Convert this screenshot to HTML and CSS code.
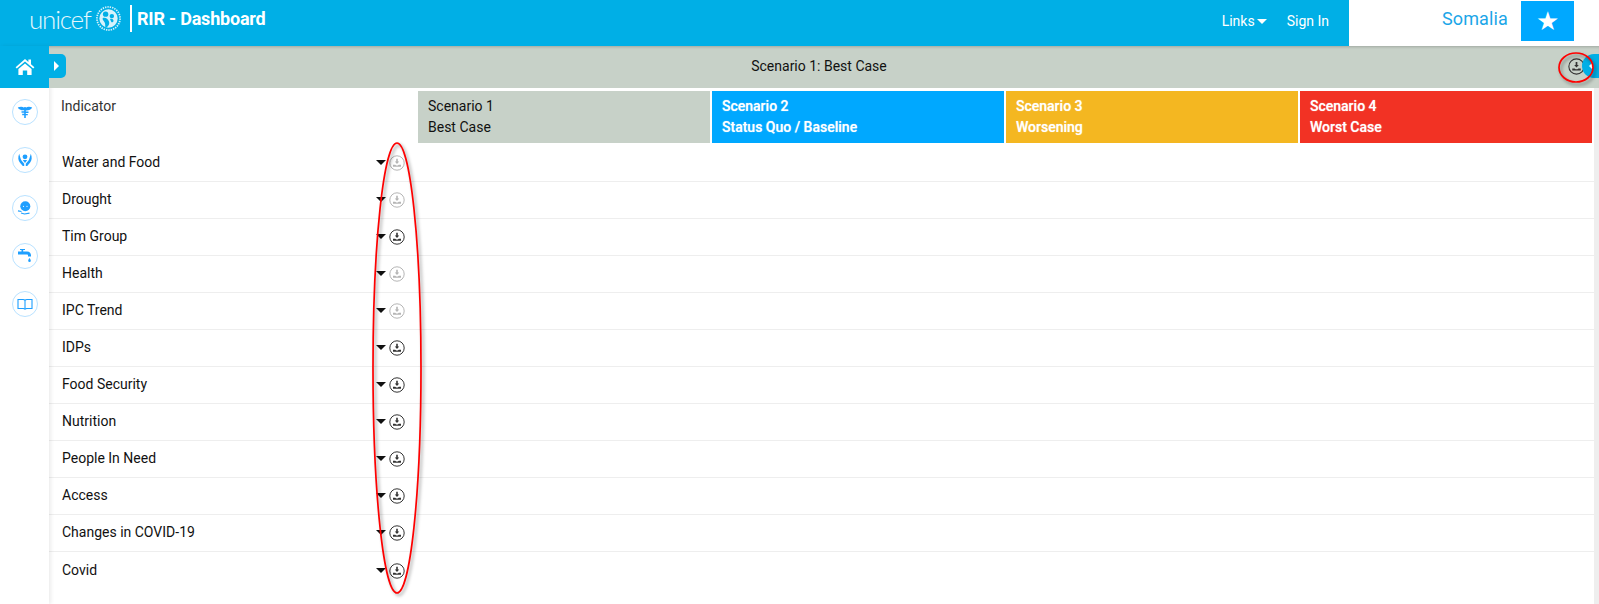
FILE: index.html
```html
<!DOCTYPE html>
<html lang="en">
<head>
  <meta charset="UTF-8">
  <meta name="viewport" content="width=device-width, initial-scale=1.0">
  <title>RIR - Dashboard</title>
  <link rel="stylesheet" href="styles.css">
</head>
<body>
  <svg class="defs" width="0" height="0">
    <symbol id="dl" viewBox="0 0 16 16">
      <circle cx="8" cy="8" r="7.2" fill="none" stroke="currentColor" stroke-width="1"/>
      <path d="M7.2 3.800h1.600v2.800h1.400L8 9 5.800 6.600h1.400z" fill="currentColor"/>
      <path d="M4 9.800h2.200l1 .8h1.600l1-.8H12v2H4z" fill="currentColor"/>
    </symbol>
  </svg>

  <header class="topbar">
    <div class="brand">
      <span class="logo-text">unicef</span>
      <svg class="emblem" viewBox="0 0 26 26">
        <circle cx="13" cy="13" r="12" fill="none" stroke="#d6f2fb" stroke-width="1.800" stroke-dasharray="1.400 1.100"/>
        <circle cx="13" cy="13" r="9.500" fill="#d6f2fb"/>
        <circle cx="10" cy="8.500" r="2.800" fill="#00afe6"/>
        <circle cx="16.500" cy="10.500" r="2.300" fill="#00afe6"/>
        <path d="M7 12.500c3-.8 5.500 1 6.500 3.500s-1 6-3.200 6.200c-1.300-.2-.2-3-1.300-5-.9-1.700-2.600-3-2-4.700z" fill="#00afe6"/>
        <path d="M14.500 13.500c1.500-.4 3 0 3.600 1.200.5 1.200-.6 2.300-2 2.200z" fill="#00afe6"/>
      </svg>
      <span class="brand-line"></span>
      <span class="brand-title">RIR - Dashboard</span>
    </div>
    <nav class="topnav">
      <a class="topnav-link">Links<span class="caret"></span></a>
      <a class="topnav-link">Sign In</a>
    </nav>
    <div class="country">
      <span class="country-name">Somalia</span>
      <button class="star-btn">★</button>
    </div>
  </header>

  <div class="page">
    <aside class="sidebar">
      <div class="home">
        <svg width="20" height="18" viewBox="0 0 20 18"><path d="M10 1 .6 9.200l1.200 1.300L10 3.400l8.200 7.100 1.200-1.300L16 6.200V1.600h-2.600v2.400zM3.400 11 10 5.400l6.600 5.600V17h-4.400v-4.600H7.800V17H3.400z" fill="#fff"/></svg>
      </div>
      <div class="side-icons">
        <div class="side-icon">
          <svg viewBox="0 0 16 16"><path d="M.8 3.500c2.400-1 4.800-1 6.400.3V3h1.600v.8c1.600-1.300 4-1.300 6.400-.3-.8 1.900-3.400 3-6.400 2.900v1h2.700v1.500H8.800v1h2v1.400h-2V14H7.200v-2.800h-2V9.800h2v-1H4.500V7.300h2.700v-1C4.200 6.500 1.600 5.400.8 3.500z" fill="#1e9fff"/></svg>
        </div>
        <div class="side-icon">
          <svg viewBox="0 0 16 16"><circle cx="8" cy="4.800" r="2.400" fill="#1e9fff"/><path d="M5.800 8h4.400L8 11z" fill="#1e9fff"/><path d="M2.200 1.800c-1.400 3.400-1.200 6.600.8 9l2.800 3.200h1.400v-2.300L4.500 8.500C3.500 7 3 4.500 2.200 1.800zM13.800 1.800c1.400 3.400 1.200 6.600-.8 9l-2.800 3.200H8.800v-2.300l2.700-3.200c1-1.500 1.500-4 2.300-6.700z" fill="#1e9fff"/></svg>
        </div>
        <div class="side-icon">
          <svg viewBox="0 0 16 16"><circle cx="8.300" cy="6.300" r="5" fill="#1e9fff"/><circle cx="6.500" cy="6.300" r=".6" fill="#fff"/><circle cx="10" cy="6.300" r=".6" fill="#fff"/><path d="M1 10.800l3.500.7M4 13l3.500 1 5-.8" stroke="#1e9fff" stroke-width="1.200" fill="none"/></svg>
        </div>
        <div class="side-icon">
          <svg viewBox="0 0 16 16"><path d="M1 3.500h3.500V2H3V1h5v1H6.200v1.500H10c2.800 0 4 1.700 4 4v1h-3V7.200c0-.5-.3-.7-.8-.7H1z" fill="#1e9fff"/><path d="M12.500 10c.8 1.200 1.300 2 1.300 2.800a1.300 1.300 0 0 1-2.600 0c0-.8.500-1.600 1.300-2.800z" fill="#1e9fff"/></svg>
        </div>
        <div class="side-icon">
          <svg viewBox="0 0 16 16"><path d="M1 3.500h5c1 0 1.700.4 2 1 .3-.6 1-1 2-1h5v9H9.500l-1.500.7-1.500-.7H1zM8 4.500v8" fill="none" stroke="#1e9fff" stroke-width="1.100"/></svg>
        </div>
      </div>
    </aside>

    <main class="content">
      <div class="titlebar">
        <span>Scenario 1: Best Case</span>
        <svg class="title-dl"><use href="#dl"/></svg>
      </div>

      <div class="board">
        <div class="head-row">
          <div class="head-label">Indicator</div>
          <div class="scenario s1">Scenario 1<br>Best Case</div>
          <div class="scenario s2">Scenario 2<br>Status Quo / Baseline</div>
          <div class="scenario s3">Scenario 3<br>Worsening</div>
          <div class="scenario s4">Scenario 4<br>Worst Case</div>
        </div>
        <div class="rows">
          <div class="row"><span class="row-name">Water and Food</span><span class="arrow"></span><svg class="dl off"><use href="#dl"/></svg></div>
          <div class="row"><span class="row-name">Drought</span><span class="arrow"></span><svg class="dl off"><use href="#dl"/></svg></div>
          <div class="row"><span class="row-name">Tim Group</span><span class="arrow"></span><svg class="dl"><use href="#dl"/></svg></div>
          <div class="row"><span class="row-name">Health</span><span class="arrow"></span><svg class="dl off"><use href="#dl"/></svg></div>
          <div class="row"><span class="row-name">IPC Trend</span><span class="arrow"></span><svg class="dl off"><use href="#dl"/></svg></div>
          <div class="row"><span class="row-name">IDPs</span><span class="arrow"></span><svg class="dl"><use href="#dl"/></svg></div>
          <div class="row"><span class="row-name">Food Security</span><span class="arrow"></span><svg class="dl"><use href="#dl"/></svg></div>
          <div class="row"><span class="row-name">Nutrition</span><span class="arrow"></span><svg class="dl"><use href="#dl"/></svg></div>
          <div class="row"><span class="row-name">People In Need</span><span class="arrow"></span><svg class="dl"><use href="#dl"/></svg></div>
          <div class="row"><span class="row-name">Access</span><span class="arrow"></span><svg class="dl"><use href="#dl"/></svg></div>
          <div class="row"><span class="row-name">Changes in COVID-19</span><span class="arrow"></span><svg class="dl"><use href="#dl"/></svg></div>
          <div class="row"><span class="row-name">Covid</span><span class="arrow"></span><svg class="dl"><use href="#dl"/></svg></div>
        </div>
      </div>
    </main>
  </div>

  <div class="tab tab-left"><span class="tab-arrow-right"></span></div>
  <div class="tab tab-right"><span class="tab-arrow-left"></span></div>

  <svg class="mark mark-rows" viewBox="0 0 54 460"><ellipse cx="26" cy="227" rx="24" ry="225" class="mark-shadow"/><ellipse cx="24" cy="225" rx="24" ry="225" class="mark-line"/></svg>
  <svg class="mark mark-top" viewBox="0 0 40 36"><ellipse cx="19" cy="17" rx="17" ry="14.500" class="mark-shadow"/><ellipse cx="17" cy="14.500" rx="17" ry="14.500" class="mark-line"/></svg>
</body>
</html>
```

FILE: styles.css
```css
* {
  box-sizing: border-box;
}
html, body {
  height: 100%;
}
body {
  margin: 0;
  font-family: Roboto, Arial, sans-serif;
  font-size: 14px;
  color: #212529;
  background-color: #fff;
  overflow: hidden;
}
.defs {
  position: absolute;
}

/* top bar */
.topbar {
  display: flex;
  height: 46px;
  background-color: #00afe6;
  color: #fff;
}
.brand {
  display: flex;
  align-items: center;
  padding: 0 0 9px 29px;
  flex: 1;
}
.logo-text {
  width: 63px;
  font-family: Lato, Roboto, sans-serif;
  font-weight: 300;
  font-size: 26px;
  letter-spacing: -1.200px;
  line-height: 30px;
  color: #e4f7fc;
}
.emblem {
  width: 25px;
  height: 25px;
  margin-left: 4px;
}
.brand-line {
  width: 2px;
  height: 27px;
  margin-left: 9px;
  background-color: #fff;
}
.brand-title {
  margin-left: 5px;
  font-size: 18px;
  font-weight: 700;
  letter-spacing: -0.2px;
}
.topnav {
  display: flex;
  align-items: center;
  gap: 20px;
  padding: 0 20px 4px 0;
}
.topnav-link {
  display: flex;
  align-items: center;
  font-size: 14px;
}
.caret {
  width: 0;
  height: 0;
  margin-left: 2px;
  border-top: 5px solid #fff;
  border-left: 5px solid transparent;
  border-right: 5px solid transparent;
}
.country {
  display: flex;
  align-items: flex-start;
  width: 250px;
  height: 46px;
  padding: 1px 25px 0 93px;
  background-color: #fff;
}
.country-name {
  flex: 1;
  margin-top: 7px;
  font-size: 18px;
  line-height: 22px;
  letter-spacing: 0.1px;
  color: #1ba6e8;
}
.star-btn {
  width: 53px;
  height: 40px;
  padding: 0;
  border: none;
  background-color: #00a8ff;
  color: #fff;
  font-size: 26px;
  line-height: 40px;
}

/* layout */
.page {
  display: flex;
  height: 558px;
}
.sidebar {
  width: 49px;
  flex-shrink: 0;
  box-shadow: 2px 0 4px rgba(0, 0, 0, 0.08);
  position: relative;
}
.home {
  display: flex;
  align-items: center;
  justify-content: center;
  height: 42px;
  background-color: #00afe6;
}
.side-icons {
  display: flex;
  flex-direction: column;
  align-items: center;
  gap: 22px;
  padding-top: 11px;
}
.side-icon {
  display: flex;
  align-items: center;
  justify-content: center;
  width: 26px;
  height: 26px;
  border: 1px solid #b9e2ff;
  border-radius: 50%;
}
.side-icon svg {
  width: 16px;
  height: 16px;
}
.content {
  flex: 1;
}
.titlebar {
  display: flex;
  align-items: center;
  justify-content: center;
  position: relative;
  height: 42px;
  padding: 0 10px 2px 0;
  background-color: #c7d1c8;
  box-shadow: inset 0 3px 3px -2px rgba(0, 0, 0, 0.2);
  color: #111;
}
.title-dl {
  position: absolute;
  right: 14px;
  top: 12px;
  width: 17px;
  height: 17px;
  color: #333;
}

/* board */
.board {
  padding-top: 3px;
  border-right: 5px solid #eee;
  height: 516px;
}
.head-row {
  display: flex;
  height: 52px;
  gap: 2px;
}
.head-label {
  width: 369px;
  padding: 5px 12px;
  line-height: 20px;
  margin-right: -2px;
  color: #333;
}
.scenario {
  width: 292px;
  padding: 5px 10px;
  line-height: 21px;
  font-weight: 500;
  color: #fff;
  text-shadow: 0 0 1px rgba(255, 255, 255, 0.7);
}
.scenario.s1 {
  background-color: #c7d1c8;
  color: #111;
  font-weight: 400;
  text-shadow: none;
}
.scenario.s2 {
  background-color: #00a8ff;
}
.scenario.s3 {
  background-color: #f4b721;
}
.scenario.s4 {
  background-color: #f23224;
}
.rows {
  padding-top: 2px;
}
.row {
  display: flex;
  align-items: center;
  height: 37px;
  padding-left: 13px;
  border-bottom: 1px solid #eee;
  color: #111;
}
.row:last-child {
  border-bottom: none;
}
.row-name {
  width: 314px;
  margin-top: -2px;
}
.arrow {
  width: 0;
  height: 0;
  margin-top: -1px;
  border-top: 5px solid #111;
  border-left: 5px solid transparent;
  border-right: 5px solid transparent;
}
.dl {
  width: 16px;
  height: 16px;
  margin-left: 3px;
  color: #333;
}
.dl.off {
  color: #b5b5b5;
}

/* collapse tabs */
.tab {
  position: absolute;
  top: 54px;
  width: 17px;
  height: 24px;
  background-color: #00afe6;
  display: flex;
  align-items: center;
  justify-content: center;
}
.tab-left {
  left: 49px;
  border-radius: 0 5px 5px 0;
}
.tab-right {
  right: 0;
  border-radius: 12px 0 0 12px;
  justify-content: flex-end;
  padding-right: 6px;
}
.tab-arrow-right {
  border-left: 5px solid #fff;
  border-top: 5px solid transparent;
  border-bottom: 5px solid transparent;
  margin-right: 3px;
}
.tab-arrow-left {
  border-right: 4px solid #fff;
  border-top: 4px solid transparent;
  border-bottom: 4px solid transparent;
}

/* red annotations */
.mark {
  position: absolute;
  overflow: visible;
}
.mark-rows {
  left: 373px;
  top: 143px;
  width: 54px;
  height: 460px;
}
.mark-top {
  left: 1559px;
  top: 53px;
  width: 40px;
  height: 36px;
}
.mark-line {
  fill: none;
  stroke: #f00;
  stroke-width: 1.700;
}
.mark-shadow {
  fill: none;
  stroke: rgba(0, 0, 0, 0.22);
  stroke-width: 3;
  filter: blur(1.500px);
}
```
